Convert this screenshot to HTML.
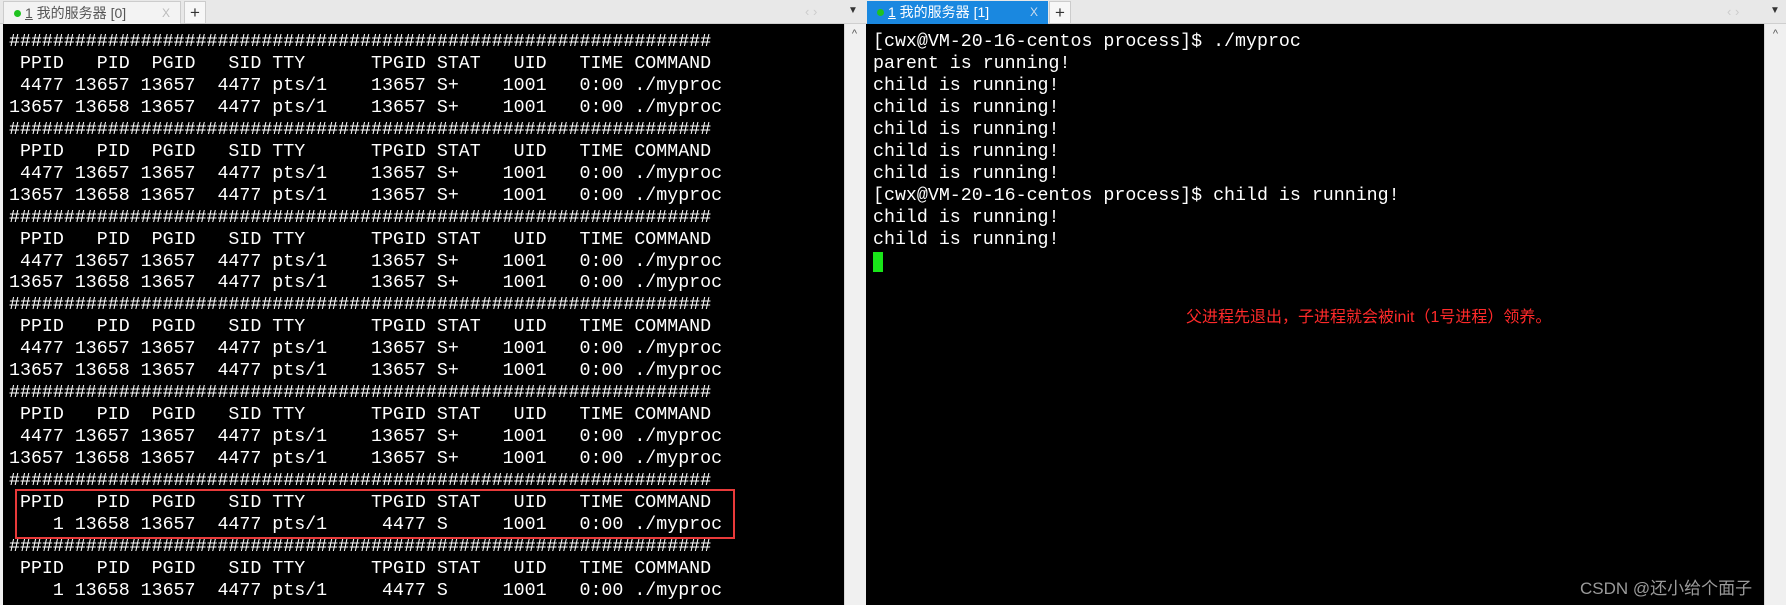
<!DOCTYPE html>
<html><head><meta charset="utf-8"><style>
*{margin:0;padding:0;box-sizing:border-box}
body{width:1786px;height:605px;background:#f0f0f0;position:relative;overflow:hidden;font-family:"Liberation Sans","Noto Sans CJK SC",sans-serif}
.bar{position:absolute;top:0;height:24px;background:#e8e8e8;border-bottom:1px solid #cfcfcf}
.tab{position:absolute;top:1px;height:23px;font-size:14px;line-height:23px;padding-left:10px}
.tab .dot{display:inline-block;width:7px;height:7px;border-radius:50%;background:#1fc31f;margin-right:4px;vertical-align:1px}
.term{position:absolute;top:24px;background:#000;color:#fff;font-family:"Liberation Mono",monospace;font-size:18.3px;line-height:21.95px;white-space:pre;padding-top:8px}
.sb{position:absolute;top:24px;background:#f0f0f0;border-left:1px solid #d8d8d8}
.plus{position:absolute;top:1px;width:22px;height:23px;background:#f7f7f7;border:1px solid #ccc;text-align:center;font-size:17px;line-height:21px;color:#333}
</style></head><body>
<div class="bar" style="left:0;width:866px"></div>
<div class="tab" style="left:3px;width:178px;background:#f3f3f3;color:#555;border:1px solid #ccc;border-bottom:none"><span class="dot"></span><u>1</u> 我的服务器 [0]<span style="position:absolute;right:10px;color:#bbb;font-size:12px">X</span></div>
<div class="plus" style="left:184px">+</div>
<div style="position:absolute;left:805px;top:4px;color:#ccc;font-size:13px">‹ ›</div>
<div style="position:absolute;left:848px;top:5px;color:#333;font-size:10px">▼</div>
<div class="bar" style="left:866px;width:920px"></div>
<div class="tab" style="left:867px;width:181px;background:#1a88e0;color:#fff"><span class="dot"></span><u>1</u> 我的服务器 [1]<span style="position:absolute;right:10px;color:#cde;font-size:12px">X</span></div>
<div class="plus" style="left:1049px">+</div>
<div style="position:absolute;left:1727px;top:4px;color:#ccc;font-size:13px">‹ ›</div>
<div style="position:absolute;left:1770px;top:5px;color:#333;font-size:10px">▼</div>

<div class="term" style="left:3px;width:841px;height:581px;padding-left:6px">################################################################
 PPID   PID  PGID   SID TTY      TPGID STAT   UID   TIME COMMAND
 4477 13657 13657  4477 pts/1    13657 S+    1001   0:00 ./myproc
13657 13658 13657  4477 pts/1    13657 S+    1001   0:00 ./myproc
################################################################
 PPID   PID  PGID   SID TTY      TPGID STAT   UID   TIME COMMAND
 4477 13657 13657  4477 pts/1    13657 S+    1001   0:00 ./myproc
13657 13658 13657  4477 pts/1    13657 S+    1001   0:00 ./myproc
################################################################
 PPID   PID  PGID   SID TTY      TPGID STAT   UID   TIME COMMAND
 4477 13657 13657  4477 pts/1    13657 S+    1001   0:00 ./myproc
13657 13658 13657  4477 pts/1    13657 S+    1001   0:00 ./myproc
################################################################
 PPID   PID  PGID   SID TTY      TPGID STAT   UID   TIME COMMAND
 4477 13657 13657  4477 pts/1    13657 S+    1001   0:00 ./myproc
13657 13658 13657  4477 pts/1    13657 S+    1001   0:00 ./myproc
################################################################
 PPID   PID  PGID   SID TTY      TPGID STAT   UID   TIME COMMAND
 4477 13657 13657  4477 pts/1    13657 S+    1001   0:00 ./myproc
13657 13658 13657  4477 pts/1    13657 S+    1001   0:00 ./myproc
################################################################
 PPID   PID  PGID   SID TTY      TPGID STAT   UID   TIME COMMAND
    1 13658 13657  4477 pts/1     4477 S     1001   0:00 ./myproc
################################################################
 PPID   PID  PGID   SID TTY      TPGID STAT   UID   TIME COMMAND
    1 13658 13657  4477 pts/1     4477 S     1001   0:00 ./myproc</div>
<div style="position:absolute;left:15px;top:489px;width:720px;height:50px;border:2px solid #e83a3a"></div>
<div class="sb" style="left:844px;width:20px;height:581px"><div style="color:#555;font-size:11px;text-align:center;margin-top:4px">^</div></div>

<div class="term" style="left:866px;width:898px;height:581px;padding-left:7px">[cwx@VM-20-16-centos process]$ ./myproc
parent is running!
child is running!
child is running!
child is running!
child is running!
child is running!
[cwx@VM-20-16-centos process]$ child is running!
child is running!
child is running!
</div>
<div style="position:absolute;left:873px;top:252px;width:10px;height:20px;background:#19e619"></div>
<div style="position:absolute;left:1186px;top:303px;color:#ff2a2a;font-size:16px;font-family:'Liberation Sans','Noto Sans CJK SC',sans-serif">父进程先退出，子进程就会被init（1号进程）领养。</div>
<div class="sb" style="left:1764px;width:22px;height:581px"><div style="color:#555;font-size:11px;text-align:center;margin-top:4px">^</div></div>
<div style="position:absolute;left:1580px;top:574px;color:#9a9a9a;font-size:17px">CSDN @还小给个面子</div>
</body></html>
